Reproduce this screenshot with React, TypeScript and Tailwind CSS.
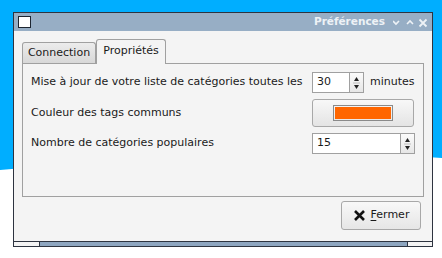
import React from "react";

const font = { fontFamily: '"DejaVu Sans", Verdana, sans-serif' };

const SpinArrows = () => (
    <div className="flex w-[14px] flex-col items-center justify-center border border-l-0 border-[#a0a0a0] bg-gradient-to-b from-[#fbfbfb] to-[#e6e6e6]">
        <svg width="7" height="16" viewBox="0 0 7 16">
            <path d="M3.5 2 L6 6 L1 6 Z" fill="#222" />
            <line x1="0" y1="8" x2="7" y2="8" stroke="#bdbdbd" />
            <path d="M1 10 L6 10 L3.5 14 Z" fill="#222" />
        </svg>
    </div>
);

const SpinBox = ({ value, width }: { value: string; width: string }) => (
    <div className="flex h-[21px]">
        <div className={`${width} flex items-center border border-[#a0a0a0] bg-white pl-[4px] text-[11px] text-[#1a1a1a]`}>
            {value}
        </div>
        <SpinArrows />
    </div>
);

const App: React.FC = () => {
    return (
        <div className="relative h-[258px] w-[442px] overflow-hidden bg-white" style={font}>
            {/* wallpaper */}
            <svg className="absolute inset-0" width="442" height="258" viewBox="0 0 442 258">
                <path d="M0 0 H442 V158 C330 150 200 152 0 170 Z" fill="#00aeff" />
            </svg>

            <div className="relative ml-[13px] mt-[12px] flex h-[235px] w-[420px] flex-col border border-[#2e3440] bg-[#f4f4f4]">
                {/* title bar */}
                <div className="flex h-[18px] items-center bg-[#97aec5] pl-[4px] pr-[3px]">
                    <div className="h-[12px] w-[13px] border-[1.5px] border-[#1d2530] bg-white" />
                    <div className="flex-1" />
                    <span className="mr-[8px] text-[10.5px] font-bold text-[#eef2f6]">Préférences</span>
                    <svg width="36" height="12" viewBox="0 0 36 12" className="mt-[1px]">
                        <path d="M0 4 L3 7 L6 4" stroke="#eef2f6" strokeWidth="1.6" fill="none" />
                        <path d="M14 7 L17 4 L20 7" stroke="#eef2f6" strokeWidth="1.6" fill="none" />
                        <path d="M26.5 2.5 L33.5 9.5 M33.5 2.5 L26.5 9.5" stroke="#eef2f6" strokeWidth="1.8" fill="none" />
                    </svg>
                </div>

                {/* body */}
                <div className="flex flex-1 flex-col pl-[8px] pr-[8px] pt-[8px]">
                    <div className="flex items-end">
                        <div className="flex h-[21px] w-[74px] items-center justify-center rounded-t-[3px] border border-b-0 border-[#a0a0a0] bg-gradient-to-b from-[#ececec] to-[#d8d8d8] text-[11px] text-[#1a1a1a]">
                            Connection
                        </div>
                        <div className="relative -mb-px flex h-[25px] w-[70px] items-center justify-center rounded-t-[3px] border border-b-0 border-[#a0a0a0] bg-[#f4f4f4] pb-[2px] text-[11px] text-[#1a1a1a]">
                            Propriétés
                        </div>
                    </div>
                    <div className="flex h-[134px] w-[402px] flex-col border border-[#a0a0a0] pl-[8px] pt-[8px] text-[11px] text-[#1a1a1a]">
                        <div className="flex h-[21px] items-center">
                            <span className="w-[281px] whitespace-nowrap">Mise à jour de votre liste de catégories toutes les</span>
                            <SpinBox value="30" width="w-[38px]" />
                            <span className="ml-[6px]">minutes</span>
                        </div>
                        <div className="mt-[6px] flex h-[28px] items-center">
                            <span className="w-[281px]">Couleur des tags communs</span>
                            <div className="flex h-[28px] w-[102px] items-center justify-center rounded-[3px] border border-[#a8a8a8] bg-gradient-to-b from-[#f8f8f8] to-[#e4e4e4]">
                                <div className="h-[16px] w-[60px] border border-[#8a8a8a] p-px">
                                    <div className="h-full w-full bg-[#ff6600]" />
                                </div>
                            </div>
                        </div>
                        <div className="mt-[6px] flex h-[21px] items-center">
                            <span className="w-[281px]">Nombre de catégories populaires</span>
                            <SpinBox value="15" width="w-[89px]" />
                        </div>
                    </div>
                    <div className="mt-[4px] flex justify-end pr-[3px]">
                        <button className="flex h-[29px] w-[80px] items-center justify-center gap-[5px] rounded-[3px] border border-[#a8a8a8] bg-gradient-to-b from-[#f8f8f8] to-[#e6e6e6] text-[11px] text-[#1a1a1a]">
                            <svg width="13" height="13" viewBox="0 0 13 13">
                                <path d="M2 2 L11 11 M11 2 L2 11" stroke="#111" strokeWidth="2.6" />
                            </svg>
                            <span>
                                <span className="underline underline-offset-2">F</span>ermer
                            </span>
                        </button>
                    </div>
                </div>

                {/* bottom frame handles */}
                <div className="flex h-[5px] border-t border-[#2e3440]">
                    <div className="w-[26px] border-r border-[#2e3440] bg-[#f4f4f4]" />
                    <div className="flex-1 bg-[#8ea6c0]" />
                    <div className="w-[25px] border-l border-[#2e3440] bg-[#f4f4f4]" />
                </div>
            </div>
        </div>
    );
};

export default App;
